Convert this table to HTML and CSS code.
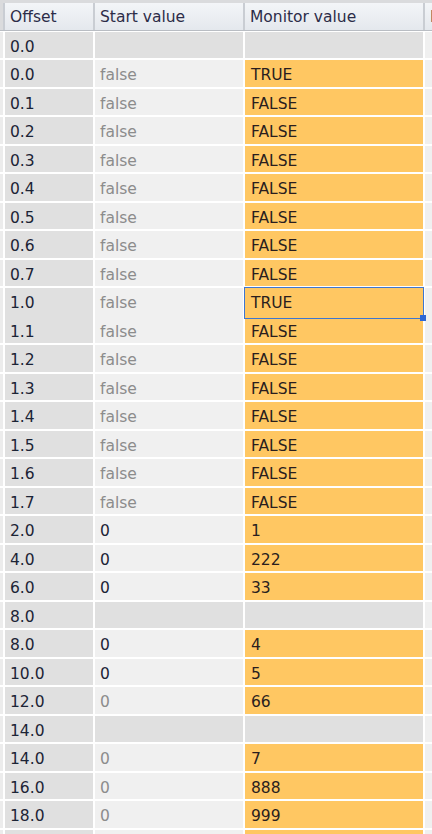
FILE: index.html
```html
<!DOCTYPE html>
<html>
<head>
<meta charset="utf-8">
<link rel="stylesheet" href="styles.css">
</head>
<body>
<div class="table">
  <div class="head">
    <div class="hc edge"></div>
    <div class="hc">Offset</div>
    <div class="hc">Start value</div>
    <div class="hc">Monitor value</div>
    <div class="hc">Modify value</div>
  </div>
  <div class="body">
    <div class="row group"><div class="c edge"></div><div class="c off">0.0</div><div class="c st"></div><div class="c mon"></div><div class="c ext"></div></div>
    <div class="row"><div class="c edge"></div><div class="c off">0.0</div><div class="c st dim">false</div><div class="c mon">TRUE</div><div class="c ext"></div></div>
    <div class="row"><div class="c edge"></div><div class="c off">0.1</div><div class="c st dim">false</div><div class="c mon">FALSE</div><div class="c ext"></div></div>
    <div class="row"><div class="c edge"></div><div class="c off">0.2</div><div class="c st dim">false</div><div class="c mon">FALSE</div><div class="c ext"></div></div>
    <div class="row"><div class="c edge"></div><div class="c off">0.3</div><div class="c st dim">false</div><div class="c mon">FALSE</div><div class="c ext"></div></div>
    <div class="row"><div class="c edge"></div><div class="c off">0.4</div><div class="c st dim">false</div><div class="c mon">FALSE</div><div class="c ext"></div></div>
    <div class="row"><div class="c edge"></div><div class="c off">0.5</div><div class="c st dim">false</div><div class="c mon">FALSE</div><div class="c ext"></div></div>
    <div class="row"><div class="c edge"></div><div class="c off">0.6</div><div class="c st dim">false</div><div class="c mon">FALSE</div><div class="c ext"></div></div>
    <div class="row"><div class="c edge"></div><div class="c off">0.7</div><div class="c st dim">false</div><div class="c mon">FALSE</div><div class="c ext"></div></div>
    <div class="row"><div class="c edge"></div><div class="c off">1.0</div><div class="c st dim">false</div><div class="c mon selected">TRUE<span class="handle"></span></div><div class="c ext"></div></div>
    <div class="row"><div class="c edge"></div><div class="c off">1.1</div><div class="c st dim">false</div><div class="c mon">FALSE</div><div class="c ext"></div></div>
    <div class="row"><div class="c edge"></div><div class="c off">1.2</div><div class="c st dim">false</div><div class="c mon">FALSE</div><div class="c ext"></div></div>
    <div class="row"><div class="c edge"></div><div class="c off">1.3</div><div class="c st dim">false</div><div class="c mon">FALSE</div><div class="c ext"></div></div>
    <div class="row"><div class="c edge"></div><div class="c off">1.4</div><div class="c st dim">false</div><div class="c mon">FALSE</div><div class="c ext"></div></div>
    <div class="row"><div class="c edge"></div><div class="c off">1.5</div><div class="c st dim">false</div><div class="c mon">FALSE</div><div class="c ext"></div></div>
    <div class="row"><div class="c edge"></div><div class="c off">1.6</div><div class="c st dim">false</div><div class="c mon">FALSE</div><div class="c ext"></div></div>
    <div class="row"><div class="c edge"></div><div class="c off">1.7</div><div class="c st dim">false</div><div class="c mon">FALSE</div><div class="c ext"></div></div>
    <div class="row"><div class="c edge"></div><div class="c off">2.0</div><div class="c st">0</div><div class="c mon">1</div><div class="c ext"></div></div>
    <div class="row"><div class="c edge"></div><div class="c off">4.0</div><div class="c st">0</div><div class="c mon">222</div><div class="c ext"></div></div>
    <div class="row"><div class="c edge"></div><div class="c off">6.0</div><div class="c st">0</div><div class="c mon">33</div><div class="c ext"></div></div>
    <div class="row group"><div class="c edge"></div><div class="c off">8.0</div><div class="c st"></div><div class="c mon"></div><div class="c ext"></div></div>
    <div class="row"><div class="c edge"></div><div class="c off">8.0</div><div class="c st">0</div><div class="c mon">4</div><div class="c ext"></div></div>
    <div class="row"><div class="c edge"></div><div class="c off">10.0</div><div class="c st">0</div><div class="c mon">5</div><div class="c ext"></div></div>
    <div class="row"><div class="c edge"></div><div class="c off">12.0</div><div class="c st dim">0</div><div class="c mon">66</div><div class="c ext"></div></div>
    <div class="row group"><div class="c edge"></div><div class="c off">14.0</div><div class="c st"></div><div class="c mon"></div><div class="c ext"></div></div>
    <div class="row"><div class="c edge"></div><div class="c off">14.0</div><div class="c st dim">0</div><div class="c mon">7</div><div class="c ext"></div></div>
    <div class="row"><div class="c edge"></div><div class="c off">16.0</div><div class="c st dim">0</div><div class="c mon">888</div><div class="c ext"></div></div>
    <div class="row"><div class="c edge"></div><div class="c off">18.0</div><div class="c st dim">0</div><div class="c mon">999</div><div class="c ext"></div></div>
    <div class="row"><div class="c edge"></div><div class="c off"></div><div class="c st"></div><div class="c mon"></div><div class="c ext"></div></div>
  </div>
</div>
</body>
</html>
```

FILE: styles.css
```css
html, body {
  margin: 0;
  padding: 0;
  background: #ffffff;
  overflow: hidden;
}
body {
  width: 432px;
  height: 834px;
  font-family: "DejaVu Sans", "Open Sans", sans-serif;
  font-size: 15.5px;
}
.table {
  display: flex;
  flex-direction: column;
}
.head {
  display: grid;
  grid-template-columns: 3px 88px 148px 178px 1fr;
  column-gap: 2px;
  height: 27px;
  padding-top: 3px;
  background: #c9cdd3;
  border-bottom: 1px solid #b9bdc3;
  box-shadow: inset 0 3px 0 #dadbdd;
}
.hc {
  background: linear-gradient(#f3f5f8, #e4e8ed);
  color: #2c2c48;
  line-height: 28px;
  padding-left: 5px;
  white-space: nowrap;
  overflow: hidden;
}
.hc.edge {
  padding: 0;
  background: #dadbdd;
}
.body {
  display: flex;
  flex-direction: column;
  row-gap: 2px;
  padding-top: 1px;
}
.row {
  display: grid;
  grid-template-columns: 3px 88px 148px 178px 1fr;
  column-gap: 2px;
  height: 26px;
  flex: none;
}
.row:nth-child(even) {
  height: 27px;
}
.c {
  line-height: 30px;
  padding-left: 5px;
  white-space: nowrap;
  overflow: hidden;
  color: #1c2436;
  position: relative;
}
.c.edge {
  padding: 0;
  background: #ececec;
}
.c.off {
  background: #e0e0e0;
}
.c.st {
  background: #f0f0f0;
}
.c.st.dim {
  color: #8c8c8c;
}
.c.mon {
  background: #ffc762;
  padding-left: 6px;
  color: #2a1e1e;
}
.c.ext {
  background: #f0f0f0;
}
.row.group .c.st,
.row.group .c.mon {
  background: #e0e0e0;
}
.c.mon.selected {
  overflow: visible;
  outline: 1px solid #3f76cf;
  outline-offset: 0;
  z-index: 1;
}
.handle {
  position: absolute;
  right: -3px;
  bottom: -3px;
  width: 6px;
  height: 6px;
  background: #2d66d4;
}
```
